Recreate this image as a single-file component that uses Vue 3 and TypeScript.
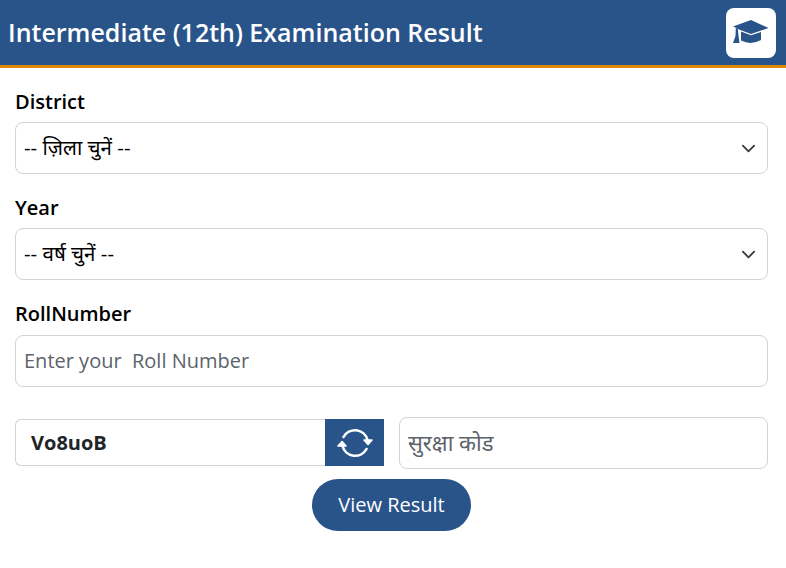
<template>
  <div class="page">
    <header class="top">
      <h1>Intermediate (12th) Examination Result</h1>
      <div class="logo">
        <svg viewBox="0 0 36 23" width="36" height="23" aria-hidden="true">
          <path d="M0 6.500L18 0l17.500 8L18 14 6 9.500 3.500 8z" />
          <path d="M8 11.500l10 3.800 10-3.300v8q-10 5.500-20 .5z" />
          <path d="M2.800 8l2 .5.700 7.500 1 7H0l2.500-7z" />
        </svg>
      </div>
    </header>

    <form class="form" @submit.prevent>
      <div v-for="field in selects" :key="field.label" class="field">
        <label>{{ field.label }}</label>
        <div class="select-wrap">
          <select class="control">
            <option>{{ field.placeholder }}</option>
          </select>
          <svg class="chevron" viewBox="0 0 16 16" width="15" height="15" aria-hidden="true">
            <path d="M2 5l6 6 6-6" fill="none" stroke="#343a40" stroke-width="1.9" stroke-linecap="round" stroke-linejoin="round" />
          </svg>
        </div>
      </div>

      <div class="field roll">
        <label>RollNumber</label>
        <input class="control" type="text" placeholder="Enter your  Roll Number" />
      </div>

      <div class="captcha-row">
        <div class="captcha">
          <span class="code">Vo8uoB</span>
          <button type="button" class="refresh" aria-label="Refresh">
            <svg viewBox="0 0 36 36" width="36" height="36" fill="none" stroke="#fff" stroke-width="2.6" stroke-linecap="round" stroke-linejoin="round">
              <path d="M6.500 12A13 13 0 0 1 30.500 15" />
              <path d="M29.500 24A13 13 0 0 1 5.500 21" />
              <path d="M27 15h8l-4 4.500z" fill="#fff" stroke-width="1.600" />
              <path d="M1 21h8l-4-4.500z" fill="#fff" stroke-width="1.600" />
            </svg>
          </button>
        </div>
        <input class="control code-input" type="text" placeholder="सुरक्षा कोड" />
      </div>

      <button type="submit" class="submit">View Result</button>
    </form>
  </div>
</template>

<script setup lang="ts">
const selects = [
  { label: "District", placeholder: "-- ज़िला चुनें --" },
  { label: "Year", placeholder: "-- वर्ष चुनें --" },
];
</script>

<style>
html,
body {
  background: #fff;
}
</style>

<style scoped>
.page {
  font-family: "Open Sans", "Noto Sans", sans-serif;
  color: #000;
}

.top {
  height: 65px;
  background-color: #29548a;
  border-bottom: 3px solid #dd8a0a;
  box-sizing: content-box;
  display: flex;
  align-items: center;
  justify-content: space-between;
  padding: 0 10px 0 8px;
}

.top h1 {
  margin: 0 0 2px;
  color: #fff;
  font-size: 25px;
  font-weight: 600;
}

.logo {
  width: 50px;
  height: 50px;
  background: #fff;
  border-radius: 8px;
  display: flex;
  align-items: center;
  justify-content: center;
}

.logo svg {
  fill: #29548a;
  margin-bottom: 2px;
}

.form {
  padding: 20px 18px 0 15px;
  display: flex;
  flex-direction: column;
}

.field {
  margin-bottom: 20px;
}

.field label {
  display: block;
  font-size: 20px;
  font-weight: 600;
  line-height: 28px;
  margin-bottom: 6px;
}

.field.roll label {
  margin-bottom: 7px;
}

.control {
  display: block;
  width: 100%;
  height: 52px;
  box-sizing: border-box;
  background: #fff;
  border: 1px solid #d3d3d3;
  border-radius: 8px;
  padding: 0 8px 2px;
  font-family: inherit;
  font-size: 20px;
  color: #000;
  outline: none;
}

.control::placeholder {
  color: #5c636a;
  opacity: 1;
}

select.control {
  appearance: none;
  padding-right: 36px;
  font-size: 20.5px;
}

.code-input {
  font-size: 22px;
}

.select-wrap {
  position: relative;
}

.chevron {
  position: absolute;
  right: 12px;
  top: 19px;
  pointer-events: none;
}

.captcha-row {
  display: grid;
  grid-template-columns: 369px 369px;
  gap: 15px;
  align-items: center;
  margin-top: 10px;
}

.captcha {
  display: flex;
  height: 47px;
  margin-bottom: 1px;
  box-sizing: border-box;
  border: 1px solid #d3d3d3;
  border-right: 0;
  border-radius: 6px 0 0 6px;
}

.code {
  flex: 1;
  display: flex;
  align-items: center;
  padding-left: 15px;
  font-size: 20px;
  font-weight: 700;
  color: #212529;
}

.refresh {
  width: 59px;
  margin: -1px 0;
  border: 0;
  padding: 0;
  background: #29548a;
  display: flex;
  align-items: center;
  justify-content: center;
}

.submit {
  align-self: center;
  margin-top: 10px;
  width: 159px;
  height: 52px;
  padding: 0 0 2px;
  border: 0;
  border-radius: 26px;
  background: #29548a;
  color: #fff;
  font-family: inherit;
  font-size: 20px;
}
</style>
